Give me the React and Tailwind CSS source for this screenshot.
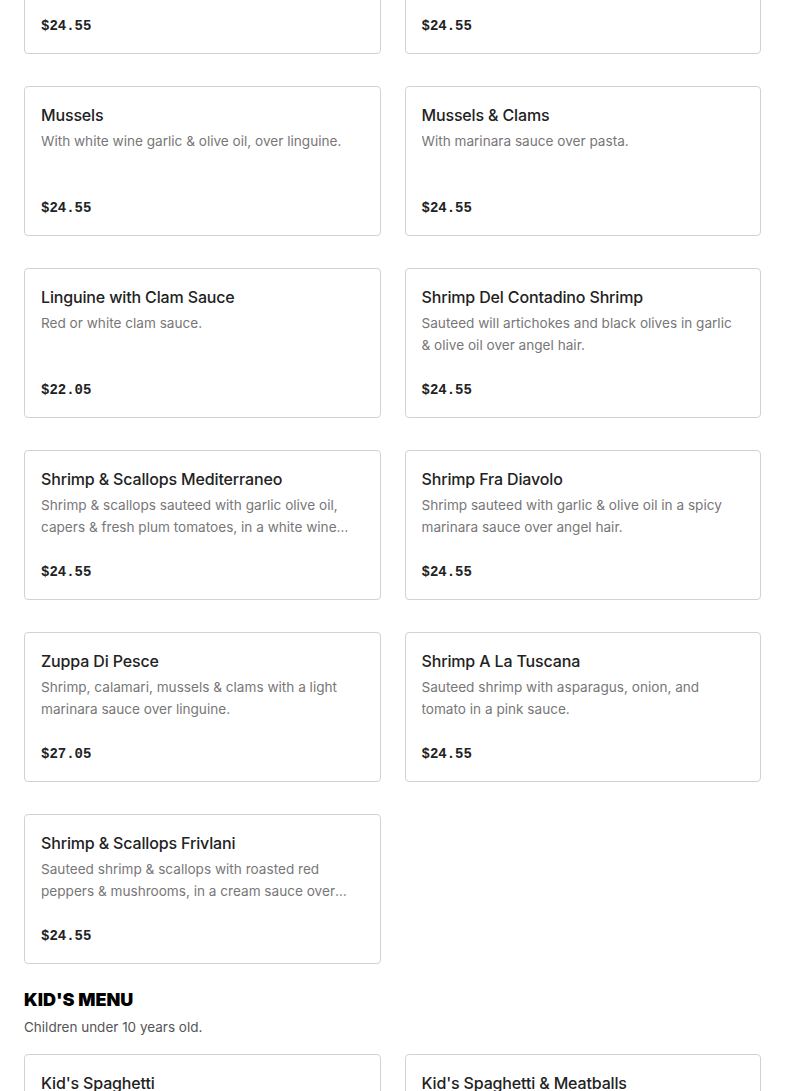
const SEAFOOD = [
  { name: 'Shrimp Scampi', desc: 'Sauteed shrimp in garlic, lemon & white wine over linguine.', price: '$24.55' },
  { name: 'Calamari Marinara', desc: 'Tender calamari in marinara sauce over linguine.', price: '$24.55' },
  { name: 'Mussels', desc: 'With white wine garlic & olive oil, over linguine.', price: '$24.55' },
  { name: 'Mussels & Clams', desc: 'With marinara sauce over pasta.', price: '$24.55' },
  { name: 'Linguine with Clam Sauce', desc: 'Red or white clam sauce.', price: '$22.05' },
  { name: 'Shrimp Del Contadino Shrimp', desc: 'Sauteed will artichokes and black olives in garlic & olive oil over angel hair.', price: '$24.55' },
  { name: 'Shrimp & Scallops Mediterraneo', desc: 'Shrimp & scallops sauteed with garlic olive oil, capers & fresh plum tomatoes, in a white wine sauce over linguine.', price: '$24.55' },
  { name: 'Shrimp Fra Diavolo', desc: 'Shrimp sauteed with garlic & olive oil in a spicy marinara sauce over angel hair.', price: '$24.55' },
  { name: 'Zuppa Di Pesce', desc: 'Shrimp, calamari, mussels & clams with a light marinara sauce over linguine.', price: '$27.05' },
  { name: 'Shrimp A La Tuscana', desc: 'Sauteed shrimp with asparagus, onion, and tomato in a pink sauce.', price: '$24.55' },
  { name: 'Shrimp & Scallops Frivlani', desc: 'Sauteed shrimp & scallops with roasted red peppers & mushrooms, in a cream sauce over linguine.', price: '$24.55' },
];

const KIDS = [
  { name: "Kid's Spaghetti", desc: 'With marinara sauce.', price: '$9.95' },
  { name: "Kid's Spaghetti & Meatballs", desc: 'With marinara sauce and meatballs.', price: '$11.95' },
];

function MenuCard({ item }) {
  return (
    <div className="h-[150px] border border-[#d2d2d2] rounded-[4px] bg-white px-4 pt-4 pb-[15px] flex flex-col">
      <h3 className="text-[16px] leading-[24px] font-medium text-[#222] font-['Inter',sans-serif] tracking-[-0.15px]">
        {item.name}
      </h3>
      <p className="mt-[3px] h-[44px] text-[13.6px] leading-[22px] text-[#777] font-['Inter',sans-serif] line-clamp-2">
        {item.desc}
      </p>
      <div className="mt-auto text-[14px] leading-[24px] font-bold text-[#222] font-['Liberation_Mono',monospace]">
        {item.price}
      </div>
    </div>
  );
}

export default function App() {
  return (
    <div className="bg-white min-h-screen overflow-hidden">
      <div className="px-6 -mt-[96px]">
        <div className="grid grid-cols-2 gap-x-6 gap-y-8">
          {SEAFOOD.map((item) => (
            <MenuCard key={item.name} item={item} />
          ))}
        </div>

        <h2 className="mt-[23px] text-[18px] leading-[26px] font-black text-black uppercase font-['Inter',sans-serif]">
          Kid's Menu
        </h2>
        <p className="mt-[3px] text-[13.5px] leading-[22px] text-[#555] font-['Inter',sans-serif]">
          Children under 10 years old.
        </p>

        <div className="mt-[16px] grid grid-cols-2 gap-x-6 gap-y-8 pb-10">
          {KIDS.map((item) => (
            <MenuCard key={item.name} item={item} />
          ))}
        </div>
      </div>
    </div>
  );
}
